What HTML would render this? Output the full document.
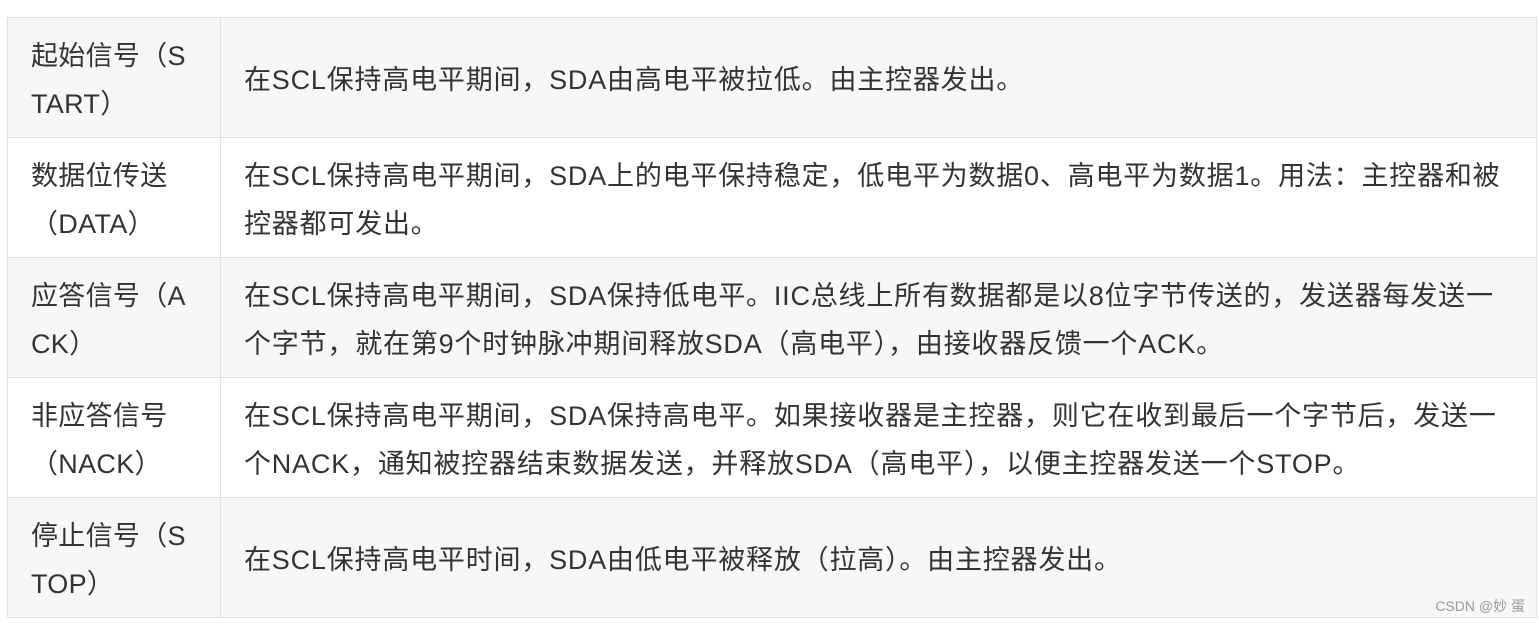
<!DOCTYPE html>
<html><head><meta charset="utf-8"><style>
body{margin:0;background:#fff;width:1539px;height:624px;overflow:hidden;position:relative;font-family:"Liberation Sans","Noto Sans CJK SC",sans-serif;color:#333;}
table{position:absolute;left:7px;top:17px;border-collapse:collapse;width:1530px;}
td{border:1px solid #dfe2e5;height:119px;box-sizing:border-box;font-size:27px;letter-spacing:0.8px;line-height:48px;padding:4px 0 0 23px;vertical-align:middle;white-space:nowrap;}
td.a{width:213px;padding-left:23px;letter-spacing:0.3px;}
tr{height:120px;}
tr:nth-child(odd) td{background:#f6f7f9;}
.wm{position:absolute;right:14px;top:596px;font-size:14px;color:#999;}
</style></head><body>
<table>
<tr><td class="a">起始信号（S<br>TART）</td><td>在SCL保持高电平期间，SDA由高电平被拉低。由主控器发出。</td></tr>
<tr><td class="a">数据位传送<br>（DATA）</td><td>在SCL保持高电平期间，SDA上的电平保持稳定，低电平为数据0、高电平为数据1。用法：主控器和被<br>控器都可发出。</td></tr>
<tr><td class="a">应答信号（A<br>CK）</td><td>在SCL保持高电平期间，SDA保持低电平。IIC总线上所有数据都是以8位字节传送的，发送器每发送一<br>个字节，就在第9个时钟脉冲期间释放SDA（高电平），由接收器反馈一个ACK。</td></tr>
<tr><td class="a">非应答信号<br>（NACK）</td><td>在SCL保持高电平期间，SDA保持高电平。如果接收器是主控器，则它在收到最后一个字节后，发送一<br>个NACK，通知被控器结束数据发送，并释放SDA（高电平），以便主控器发送一个STOP。</td></tr>
<tr><td class="a">停止信号（S<br>TOP）</td><td>在SCL保持高电平时间，SDA由低电平被释放（拉高）。由主控器发出。</td></tr>
</table>
<div class="wm">CSDN @妙 蛋</div>
</body></html>
